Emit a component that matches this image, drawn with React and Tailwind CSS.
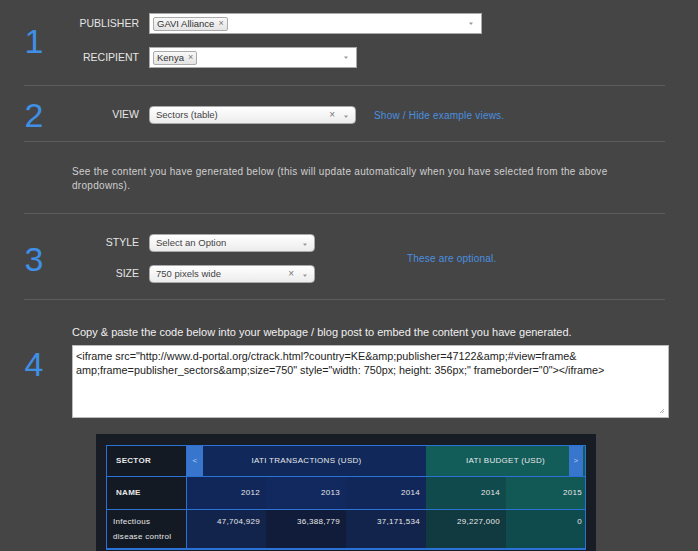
import React from "react";

const font = { fontFamily: '"Liberation Sans", Arial, sans-serif' };

function Num({ n, className = "" }) {
  return (
    <div className={`mr-[28px] flex h-0 w-[20px] shrink-0 items-center justify-center ${className}`}>
      <span className="text-[34px] leading-none text-[#3f8fe6]" style={{ fontWeight: 300 }}>{n}</span>
    </div>
  );
}

function Label({ children }) {
  return <div className="w-[67px] shrink-0 text-right text-[10.5px] text-[#e6e6e6]">{children}</div>;
}

function Tag({ children }) {
  return (
    <span className="flex h-[14px] items-center gap-[4px] rounded-[2px] border border-[#aaaaaa] bg-gradient-to-b from-[#f8f8f8] to-[#e4e4e4] px-[3px] text-[9.5px] leading-none text-[#333]">
      {children}
      <span className="text-[9px] text-[#777]">×</span>
    </span>
  );
}

function Arrow({ low }) {
  return (
    <svg width="6" height="4" viewBox="0 0 6 4" className={`shrink-0 ${low ? "mt-[4px]" : ""}`}>
      <path d="M1 0.5 L5 0.5 L3 3 Z" fill="#999" />
    </svg>
  );
}

function Multi({ w, tags }) {
  return (
    <div className={`flex h-[21px] items-center border border-[#aaaaaa] bg-white pl-[3px] pr-[7px] ${w}`}>
      <div className="flex flex-1 gap-1">{tags.map((t) => <Tag key={t}>{t}</Tag>)}</div>
      <Arrow />
    </div>
  );
}

function Single({ w, text, clear }) {
  return (
    <div className={`flex h-[18px] items-center rounded-[4px] border border-[#aaaaaa] bg-gradient-to-b from-white to-[#ececec] pl-[6px] pr-[6px] ${w}`}>
      <span className="flex-1 text-[9.5px] text-[#444]">{text}</span>
      {clear && <span className="mr-[8px] text-[10px] leading-none text-[#777]">×</span>}
      <Arrow low />
    </div>
  );
}

function Divider() {
  return <div className="ml-[24px] w-[641px] border-t border-[#5c5c5c]" />;
}

const th = "border-b border-[#2a72d6]";

export default function App() {
  return (
    <div className="h-[551px] w-full overflow-hidden bg-[#454545]" style={font}>
      {/* Section 1 */}
      <div className="flex items-center pt-[13px] pb-[17px] pl-[24px]">
        <Num n="1" />
        <div className="flex flex-col gap-[13px]">
          <div className="flex items-center gap-[10px]">
            <Label>PUBLISHER</Label>
            <Multi w="w-[333px]" tags={["GAVI Alliance"]} />
          </div>
          <div className="flex items-center gap-[10px]">
            <Label>RECIPIENT</Label>
            <Multi w="w-[208px]" tags={["Kenya"]} />
          </div>
        </div>
      </div>
      <Divider />
      {/* Section 2 */}
      <div className="flex items-center pt-[20px] pb-[17px] pl-[24px]">
        <Num n="2" />
        <div className="flex items-center gap-[10px]">
          <Label>VIEW</Label>
          <Single w="w-[207px]" text="Sectors (table)" clear />
          <span className="ml-[8px] text-[10px] tracking-[0.2px] text-[#4a90e0]">Show / Hide example views.</span>
        </div>
      </div>
      <Divider />
      <div className="pl-[72px] pr-[80px] pt-[23px] pb-[20px] text-[10px] leading-[14px] tracking-[0.3px] text-[#cfcfcf]">
        See the content you have generated below (this will update automatically when you have selected from the above dropdowns).
      </div>
      <Divider />
      {/* Section 3 */}
      <div className="flex items-center pt-[20px] pb-[16px] pl-[24px]">
        <Num n="3" />
        <div className="flex flex-col gap-[13px]">
          <div className="flex items-center gap-[10px]">
            <Label>STYLE</Label>
            <Single w="w-[166px]" text="Select an Option" />
          </div>
          <div className="flex items-center gap-[10px]">
            <Label>SIZE</Label>
            <Single w="w-[166px]" text="750 pixels wide" clear />
          </div>
        </div>
        <span className="ml-[92px] text-[10px] tracking-[0.2px] text-[#4a90e0]">These are optional.</span>
      </div>
      <Divider />
      {/* Section 4 */}
      <div className="flex pt-[26px] pl-[24px]">
        <Num n="4" className="mt-[38px]" />
        <div className="flex flex-col">
          <div className="text-[11px] leading-[13px] text-[#f0f0f0]">
            Copy &amp; paste the code below into your webpage / blog post to embed the content you have generated.
          </div>
          <div className="relative mt-[6px] h-[73px] w-[597px] border border-[#bbbbbb] bg-white px-[3px] pt-[3px] text-[10.8px] leading-[14px] text-[#222]">
            &lt;iframe src="http://www.d-portal.org/ctrack.html?country=KE&amp;amp;publisher=47122&amp;amp;#view=frame&amp;
            <br />
            amp;frame=publisher_sectors&amp;amp;size=750" style="width: 750px; height: 356px;" frameborder="0"&gt;&lt;/iframe&gt;
            <svg className="absolute right-[3px] bottom-[3px]" width="6" height="6" viewBox="0 0 6 6">
              <path d="M5 1 L1 5 M5 3 L3 5" stroke="#999" strokeWidth="0.8" />
            </svg>
          </div>
        </div>
      </div>
      {/* Embedded table */}
      <div className="ml-[96px] mt-[16px] w-[500px] bg-[#181d25] px-[10px] pt-[11px] pb-[20px]">
        <div className="w-[480px] border border-[#2a72d6] text-[8px] tracking-[0.3px] text-[#e8e8e8]">
          {/* header row */}
          <div className={`flex h-[31px] ${th}`}>
            <div className="flex w-[80px] items-center border-r border-[#2a72d6] bg-[#141a24] pl-[9px] font-bold">SECTOR</div>
            <div className="flex w-[239px] items-center bg-[#10295a]">
              <div className="flex h-full w-[16px] items-center justify-center bg-[#3875cc] text-[#bcd4f5]">&lt;</div>
              <div className="flex-1 pr-[16px] text-center">IATI TRANSACTIONS (USD)</div>
            </div>
            <div className="flex flex-1 items-center bg-[#125d5a]">
              <div className="flex-1 pl-[16px] text-center">IATI BUDGET (USD)</div>
              <div className="mr-[2px] flex h-full w-[14px] items-center justify-center bg-[#3875cc] text-[#bcd4f5]">&gt;</div>
            </div>
          </div>
          {/* year row */}
          <div className={`flex h-[33px] ${th}`}>
            <div className="flex w-[80px] items-center border-r border-[#2a72d6] bg-[#141a24] pl-[9px] font-bold">NAME</div>
            <div className="flex w-[79px] items-center justify-end bg-[#11275a] pr-[6px]">2012</div>
            <div className="flex w-[80px] items-center justify-end bg-[#11295f] pr-[6px]">2013</div>
            <div className="flex w-[80px] items-center justify-end bg-[#11275a] pr-[6px]">2014</div>
            <div className="flex w-[80px] items-center justify-end bg-[#104a4c] pr-[6px]">2014</div>
            <div className="flex flex-1 items-center justify-end bg-[#125855] pr-[3px]">2015</div>
          </div>
          {/* data row */}
          <div className={`flex h-[39px] ${th}`}>
            <div className="flex w-[80px] items-center border-r border-[#2a72d6] bg-[#141a24] pl-[6px] pr-[10px] leading-[15px]">Infectious disease control</div>
            <div className="flex w-[79px] items-start justify-end bg-[#13244c] pt-[6px] pr-[6px]">47,704,929</div>
            <div className="flex w-[80px] items-start justify-end bg-[#101c3a] pt-[6px] pr-[6px]">36,388,779</div>
            <div className="flex w-[80px] items-start justify-end bg-[#13244c] pt-[6px] pr-[6px]">37,171,534</div>
            <div className="flex w-[80px] items-start justify-end bg-[#113940] pt-[6px] pr-[6px]">29,227,000</div>
            <div className="flex flex-1 items-start justify-end bg-[#0f4b4d] pt-[6px] pr-[3px]">0</div>
          </div>
        </div>
      </div>
    </div>
  );
}
